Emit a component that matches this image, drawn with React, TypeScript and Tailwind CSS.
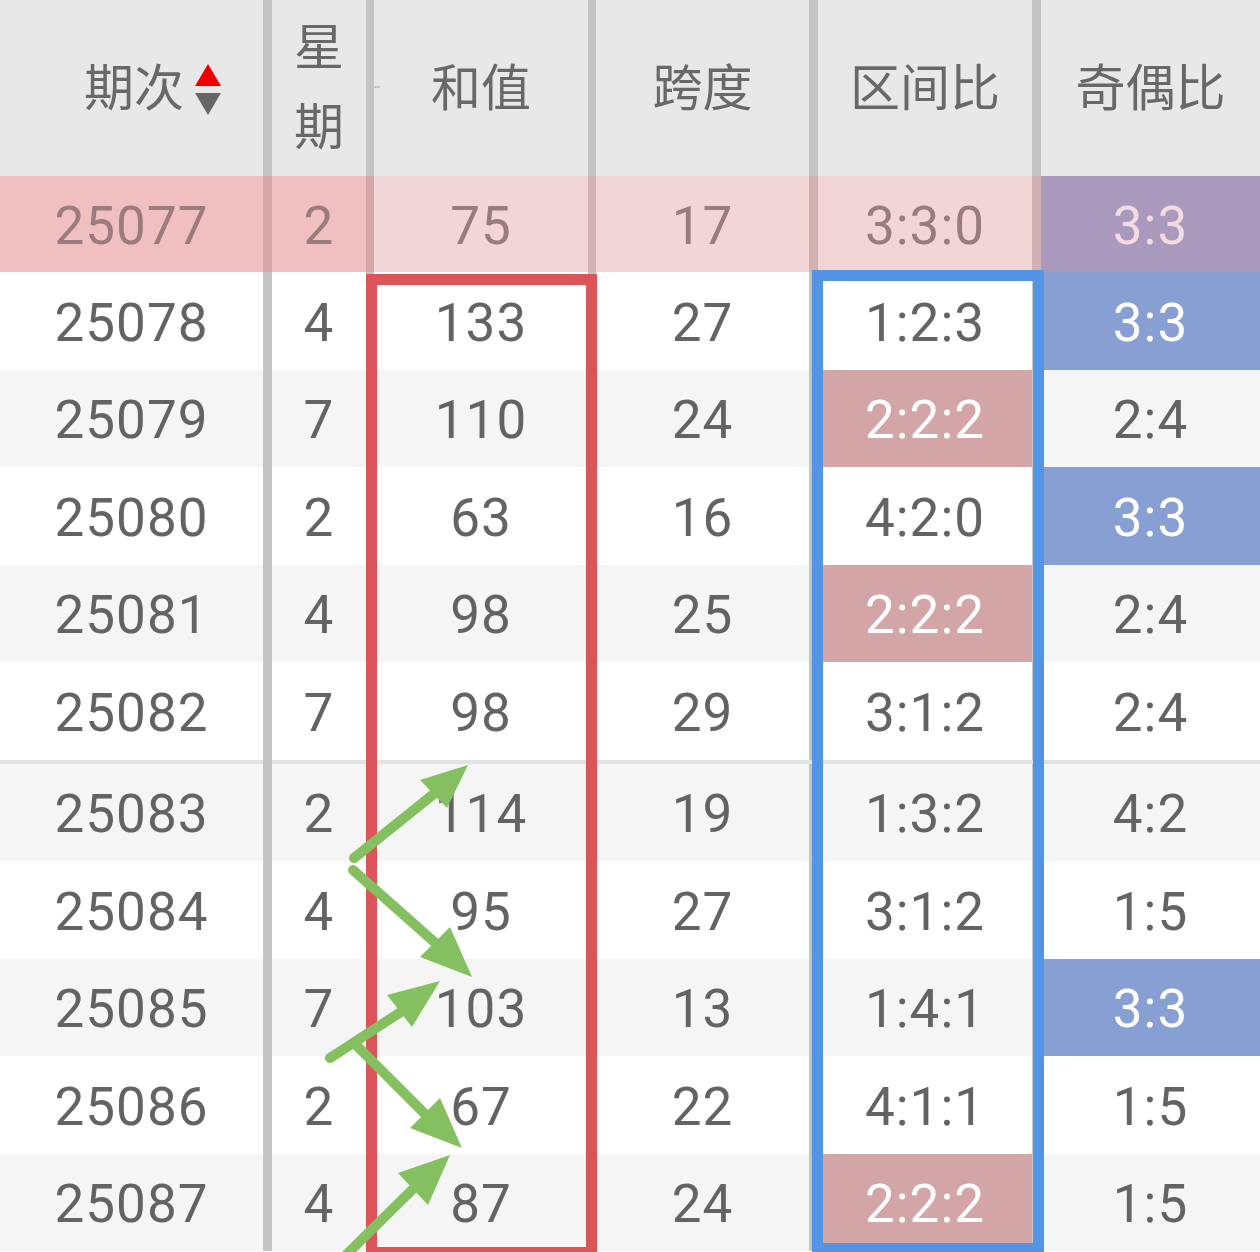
import type { ReactNode } from 'react';

type Row = {
  issue: string;
  week: string;
  sum: string;
  span: string;
  zone: string;
  odd: string;
};

const rows: Row[] = [
  { issue: '25077', week: '2', sum: '75', span: '17', zone: '3:3:0', odd: '3:3' },
  { issue: '25078', week: '4', sum: '133', span: '27', zone: '1:2:3', odd: '3:3' },
  { issue: '25079', week: '7', sum: '110', span: '24', zone: '2:2:2', odd: '2:4' },
  { issue: '25080', week: '2', sum: '63', span: '16', zone: '4:2:0', odd: '3:3' },
  { issue: '25081', week: '4', sum: '98', span: '25', zone: '2:2:2', odd: '2:4' },
  { issue: '25082', week: '7', sum: '98', span: '29', zone: '3:1:2', odd: '2:4' },
  { issue: '25083', week: '2', sum: '114', span: '19', zone: '1:3:2', odd: '4:2' },
  { issue: '25084', week: '4', sum: '95', span: '27', zone: '3:1:2', odd: '1:5' },
  { issue: '25085', week: '7', sum: '103', span: '13', zone: '1:4:1', odd: '3:3' },
  { issue: '25086', week: '2', sum: '67', span: '22', zone: '4:1:1', odd: '1:5' },
  { issue: '25087', week: '4', sum: '87', span: '24', zone: '2:2:2', odd: '1:5' },
];

const cols = 'grid grid-cols-[263px_9px_94px_8px_214px_8px_213px_9px_214px_9px_219px]';

const Cell = ({ children, className = '' }: { children?: ReactNode; className?: string }) => (
  <div className={`flex items-center justify-center ${className}`}>{children}</div>
);

const Header = () => (
  <div className={`${cols} h-[176px] bg-[#e8e8e8] text-[50px] text-[#686868]`}>
    <Cell className="pl-[42px] pt-[3px]">
      <span>期次</span>
      <span className="ml-[11px] flex flex-col items-center gap-[7px]">
        <span className="block h-0 w-0 border-x-[13px] border-b-[22px] border-x-transparent border-b-[#f20000]" />
        <span className="block h-0 w-0 border-x-[13px] border-t-[22px] border-x-transparent border-t-[#666666]" />
      </span>
    </Cell>
    <div className="bg-[#c4c4c4]" />
    <Cell className="text-center leading-[80px]">星期</Cell>
    <div className="relative bg-[#c4c4c4]">
      <span className="absolute left-[8px] top-[86px] h-[2px] w-[6px] bg-[#c4c4c4]" />
    </div>
    <Cell className="pt-[3px]">和值</Cell>
    <div className="bg-[#c4c4c4]" />
    <Cell className="pt-[3px]">跨度</Cell>
    <div className="bg-[#c4c4c4]" />
    <Cell className="pt-[3px]">区间比</Cell>
    <div className="bg-[#c4c4c4]" />
    <Cell className="pt-[3px]">奇偶比</Cell>
  </div>
);

const DataRow = ({ row, index }: { row: Row; index: number }) => {
  const top = index === 0;
  const bg = top ? 'bg-[#f2d5d7]' : index % 2 === 0 ? 'bg-[#f5f5f5]' : 'bg-white';
  const text = top ? 'text-[#9a7b7e]' : 'text-[#636363]';
  const zoneHot = row.zone === '2:2:2';
  const oddHot = !top && row.odd === '3:3';
  const divider = top ? 'bg-[#d3b1b3]' : 'bg-[#c4c4c4]';

  return (
    <div
      className={`${cols} ${top ? 'h-[96px]' : 'h-[97.5px]'} ${bg} ${text} pt-[5px] text-[53px] tracking-[1px]`}
    >
      <Cell className={top ? '-mt-[5px] bg-[#f0bfc0] pt-[5px]' : ''}>{row.issue}</Cell>
      <div className={`-mt-[5px] ${top ? 'bg-[#d6a6a8]' : 'bg-[#c4c4c4]'}`} />
      <Cell className={top ? '-mt-[5px] bg-[#f0bfc0] pt-[5px]' : ''}>{row.week}</Cell>
      <div className={`-mt-[5px] ${top ? 'bg-[#d6a6a8]' : divider}`} />
      <Cell>{row.sum}</Cell>
      <div className={`-mt-[5px] ${divider}`} />
      <Cell>{row.span}</Cell>
      <div className={`-mt-[5px] ${divider}`} />
      <Cell className={zoneHot ? '-mt-[5px] bg-[#d4a5a6] pt-[5px] text-white' : ''}>{row.zone}</Cell>
      <div className={`-mt-[5px] ${divider}`} />
      <Cell
        className={
          top
            ? '-mt-[5px] bg-[#a899bd] pt-[5px] text-[#f4dbe1]'
            : oddHot
              ? '-mt-[5px] bg-[#879fd3] pt-[5px] text-white'
              : ''
        }
      >
        {row.odd}
      </Cell>
    </div>
  );
};

const Arrows = () => (
  <svg
    className="pointer-events-none absolute left-0 top-0"
    width={1260}
    height={1252}
    viewBox="0 0 1260 1252"
  >
    <g stroke="#84c060" strokeWidth={10} strokeLinecap="round" fill="none">
      <line x1={354} y1={858} x2={440} y2={789} />
      <line x1={353} y1={870} x2={440} y2={947} />
      <line x1={330} y1={1058} x2={410} y2={1006} />
      <line x1={356} y1={1045} x2={430} y2={1119} />
      <line x1={345} y1={1256} x2={416} y2={1186} />
    </g>
    <g fill="#84c060">
      <polygon points="468,765 420,780 447,808" />
      <polygon points="472,977 420,957 450,927" />
      <polygon points="440,981 387,995 412,1027" />
      <polygon points="462,1148 410,1128 440,1098" />
      <polygon points="450,1155 398,1173 428,1205" />
    </g>
  </svg>
);

export default function App() {
  return (
    <div className="relative h-[1252px] w-[1260px] overflow-hidden bg-white font-['Roboto','Noto_Sans_CJK_SC',sans-serif]">
      <Header />
      {rows.slice(0, 6).map((row, i) => (
        <DataRow key={row.issue} row={row} index={i} />
      ))}
      {/* group separator */}
      <div className={`${cols} h-[4px] bg-[#e2e2e2]`}>
        <div />
        <div className="bg-[#c4c4c4]" />
      </div>
      {rows.slice(6).map((row, i) => (
        <DataRow key={row.issue} row={row} index={i + 6} />
      ))}

      {/* marked columns */}
      <div className="absolute left-[366px] top-[274px] h-[984px] w-[231px] border-[11px] border-[#da5459]" />
      <div className="absolute left-[812px] top-[270px] h-[984px] w-[232px] border-[11px] border-[#5394e4]" />

      <Arrows />
    </div>
  );
}
